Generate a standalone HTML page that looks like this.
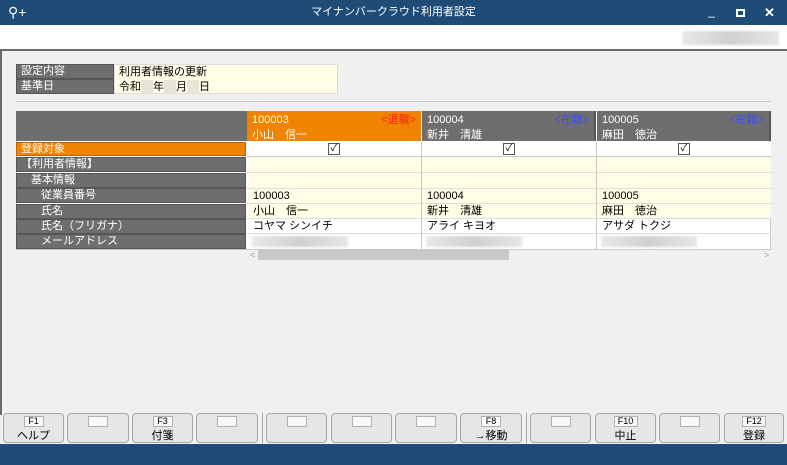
<!DOCTYPE html><html><head><meta charset="utf-8"><style>
*{margin:0;padding:0;box-sizing:border-box}
body{width:787px;height:465px;position:relative;overflow:hidden;background:#f0f0f0;font-family:"Liberation Sans","Noto Sans CJK JP",sans-serif;font-size:11px;color:#000}
.a{position:absolute}
.tb{left:0;top:0;width:787px;height:25px;background:#1f4b77;color:#fff;font-size:11px;text-align:center;line-height:25px}
.lab{background:#6e6e6e;color:#fff;border:1px solid #555;padding-left:4px;line-height:13px}
.y{background:#fffde6}
.btn{top:413px;height:30px;border:1px solid #a8a8a8;border-radius:4px;background:#e6e6e6;text-align:center;font-size:11px}
.btn .k{display:block;margin:2px auto 0;width:20px;height:11px;border:1px solid #b0b0b0;background:#f8f8f8;font-size:9px;line-height:9px}
.blur{background:linear-gradient(90deg,#e8e8e8,#d0d0d0 50%,#e6e6e6);filter:blur(1px)}
.hd{top:111px;width:174px;height:30px;color:#fff;padding:2px 5px 0;line-height:15px;overflow:hidden}
</style></head><body>
<div class="a tb">マイナンバークラウド利用者設定</div>
<div class="a" style="left:8px;top:3px;color:#fff;font-size:14px;line-height:18px">⚲+</div>
<div class="a" style="left:708px;top:4px;color:#fff;font-size:12px">_</div>
<div class="a" style="left:736px;top:9px;width:9px;height:8px;border:2px solid #fff"></div>
<div class="a" style="left:764px;top:5px;color:#fff;font-size:13px;font-weight:bold">✕</div>
<div class="a" style="left:0;top:25px;width:787px;height:25px;background:#fff"></div>
<div class="a blur" style="left:682px;top:31px;width:97px;height:14px"></div>
<div class="a" style="left:0;top:49px;width:787px;height:2px;background:#6a6a6a"></div>
<div class="a" style="left:0;top:50px;width:2px;height:365px;background:#6a6a6a"></div>
<div class="a lab" style="left:16px;top:64px;width:98px;height:15px">設定内容</div>
<div class="a lab" style="left:16px;top:79px;width:98px;height:15px">基準日</div>
<div class="a y" style="left:114px;top:64px;width:224px;height:30px;border:1px solid #ddd"></div>
<div class="a" style="left:119px;top:65px;line-height:14px">利用者情報の更新</div>
<div class="a" style="left:119px;top:80px;line-height:14px">令和<span style="background:#e6e6d6;display:inline-block;width:12px">&nbsp;</span>年<span style="background:#e6e6d6;display:inline-block;width:12px">&nbsp;</span>月<span style="background:#e6e6d6;display:inline-block;width:12px">&nbsp;</span>日</div>
<div class="a" style="left:16px;top:101px;width:755px;height:1px;background:#c8c8c8"></div>
<div class="a" style="left:16px;top:111px;width:755px;height:139px;background:#fff;border:1px solid #c8c8c8"></div>
<div class="a" style="left:16px;top:111px;width:231px;height:30px;background:#6e6e6e"></div>
<div class="a hd" style="left:247px;background:#f08300">100003<span style="float:right;color:#ff2020">&lt;退職&gt;</span><br>小山　信一</div>
<div class="a hd" style="left:422px;background:#6e6e6e;border-right:2px solid #555">100004<span style="float:right;color:#3a4cff">&lt;在籍&gt;</span><br>新井　清雄</div>
<div class="a hd" style="left:597px;background:#6e6e6e;border-right:2px solid #555">100005<span style="float:right;color:#3a4cff">&lt;在籍&gt;</span><br>麻田　徳治</div>
<div class="a lab" style="left:16px;top:142px;width:230px;height:14px;background:#f08300;border-color:#c06000">登録対象</div>
<div class="a lab" style="left:16px;top:157px;width:230px;height:15px">【利用者情報】</div>
<div class="a lab" style="left:16px;top:173px;width:230px;height:15px;padding-left:14px">基本情報</div>
<div class="a lab" style="left:16px;top:188px;width:230px;height:15px;padding-left:24px">従業員番号</div>
<div class="a lab" style="left:16px;top:204px;width:230px;height:15px;padding-left:24px">氏名</div>
<div class="a lab" style="left:16px;top:219px;width:230px;height:15px;padding-left:24px">氏名（フリガナ）</div>
<div class="a lab" style="left:16px;top:234px;width:230px;height:15px;padding-left:24px">メールアドレス</div>
<div class="a" style="left:247px;top:142px;width:524px;height:15px;background:#fff;border-bottom:1px solid #c8c8c8"></div>
<div class="a y" style="left:247px;top:157px;width:524px;height:62px"></div>
<div class="a" style="left:247px;top:172px;width:524px;height:1px;background:#ddd"></div>
<div class="a" style="left:247px;top:188px;width:524px;height:1px;background:#ddd"></div>
<div class="a" style="left:247px;top:203px;width:524px;height:1px;background:#ddd"></div>
<div class="a" style="left:247px;top:218px;width:524px;height:1px;background:#ddd"></div>
<div class="a" style="left:247px;top:233px;width:524px;height:1px;background:#ddd"></div>
<div class="a" style="left:421px;top:142px;width:1px;height:108px;background:#c8c8c8"></div>
<div class="a" style="left:596px;top:142px;width:1px;height:108px;background:#c8c8c8"></div>
<div class="a" style="left:328px;top:143px;width:12px;height:12px;border:1px solid #555;background:#fff;font-size:10px;line-height:10px;text-align:center">✓</div>
<div class="a" style="left:503px;top:143px;width:12px;height:12px;border:1px solid #555;background:#fff;font-size:10px;line-height:10px;text-align:center">✓</div>
<div class="a" style="left:678px;top:143px;width:12px;height:12px;border:1px solid #555;background:#fff;font-size:10px;line-height:10px;text-align:center">✓</div>
<div class="a" style="left:253px;top:189px;line-height:14px">100003</div>
<div class="a" style="left:427px;top:189px;line-height:14px">100004</div>
<div class="a" style="left:602px;top:189px;line-height:14px">100005</div>
<div class="a" style="left:253px;top:204px;line-height:14px">小山　信一</div>
<div class="a" style="left:427px;top:204px;line-height:14px">新井　清雄</div>
<div class="a" style="left:602px;top:204px;line-height:14px">麻田　徳治</div>
<div class="a" style="left:253px;top:219px;line-height:14px">コヤマ シンイチ</div>
<div class="a" style="left:427px;top:219px;line-height:14px">アライ キヨオ</div>
<div class="a" style="left:602px;top:219px;line-height:14px">アサダ トクジ</div>
<div class="a blur" style="left:252px;top:236px;width:96px;height:11px"></div>
<div class="a blur" style="left:426px;top:236px;width:96px;height:11px"></div>
<div class="a blur" style="left:601px;top:236px;width:96px;height:11px"></div>
<div class="a" style="left:250px;top:250px;color:#999;font-size:9px">&lt;</div>
<div class="a" style="left:258px;top:250px;width:251px;height:10px;background:#c8c8c8"></div>
<div class="a" style="left:764px;top:250px;color:#aaa;font-size:9px">&gt;</div>
<div class="a btn" style="left:3px;width:61px"><span class="k">F1</span>ヘルプ</div>
<div class="a btn" style="left:67px;width:62px"><span class="k"></span></div>
<div class="a btn" style="left:132px;width:61px"><span class="k">F3</span>付箋</div>
<div class="a btn" style="left:196px;width:62px"><span class="k"></span></div>
<div class="a" style="left:262px;top:413px;width:1px;height:30px;background:#aaa"></div>
<div class="a btn" style="left:266px;width:61px"><span class="k"></span></div>
<div class="a btn" style="left:331px;width:61px"><span class="k"></span></div>
<div class="a btn" style="left:395px;width:62px"><span class="k"></span></div>
<div class="a btn" style="left:460px;width:62px"><span class="k">F8</span>→移動</div>
<div class="a" style="left:526px;top:413px;width:1px;height:30px;background:#aaa"></div>
<div class="a btn" style="left:530px;width:61px"><span class="k"></span></div>
<div class="a btn" style="left:595px;width:61px"><span class="k" style="width:24px">F10</span>中止</div>
<div class="a btn" style="left:659px;width:61px"><span class="k"></span></div>
<div class="a btn" style="left:724px;width:60px"><span class="k" style="width:24px">F12</span>登録</div>
<div class="a" style="left:0;top:444px;width:787px;height:21px;background:#1f4b77"></div>
</body></html>
